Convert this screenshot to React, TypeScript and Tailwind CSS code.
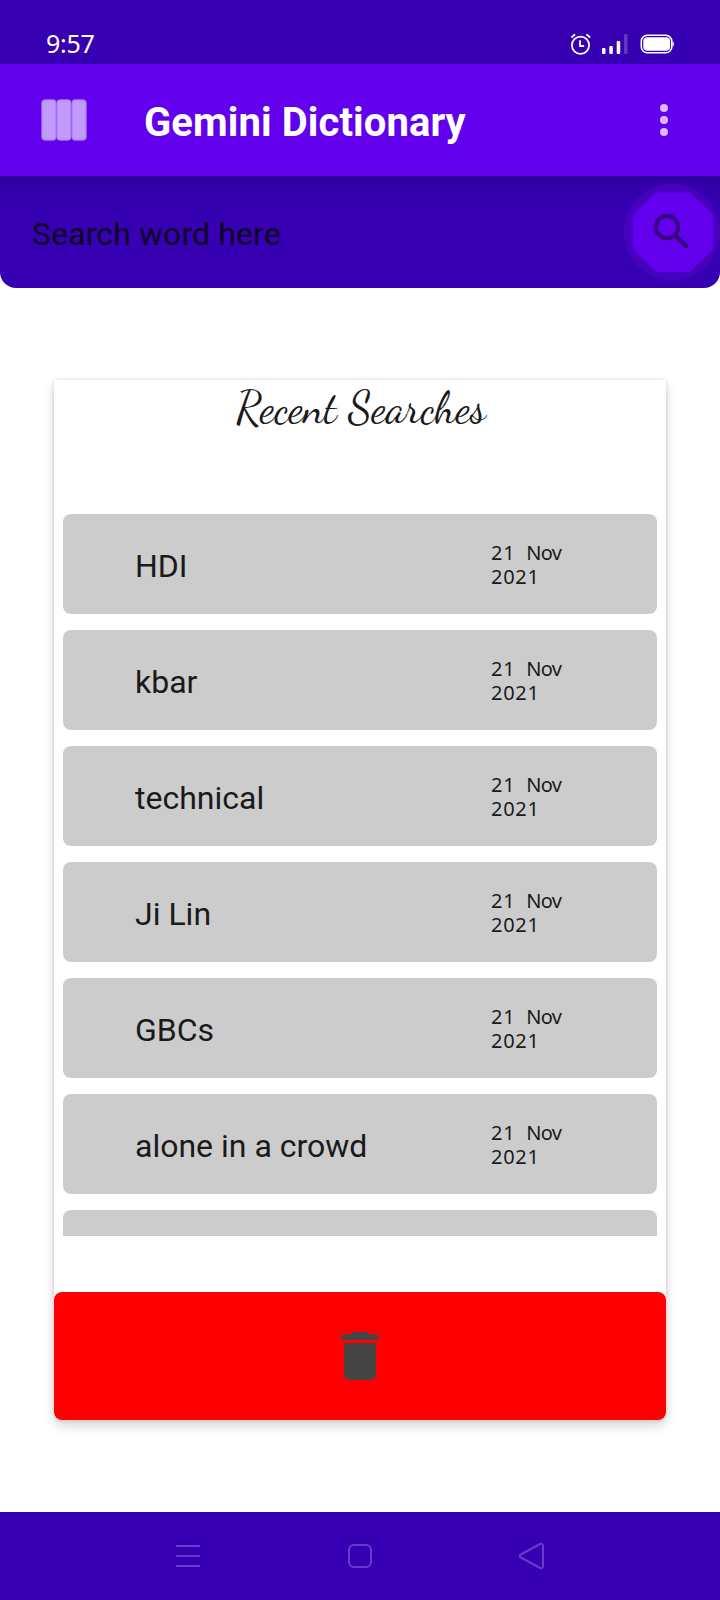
const SEARCHES = ['HDI', 'kbar', 'technical', 'Ji Lin', 'GBCs', 'alone in a crowd']

export default function App() {
  return (
    <div className="flex h-[1600px] w-[720px] flex-col overflow-hidden bg-white font-['Roboto',sans-serif] text-[#1a1a1a]">
      <StatusBar />
      <AppBar />
      <SearchBar />
      <main className="flex flex-1 flex-col px-[54px] pt-[92px] pb-[92px]">
        <section className="flex flex-1 flex-col rounded-t-xs rounded-b-lg bg-white shadow-[0_6px_12px_rgba(0,0,0,0.17),0_0_4px_rgba(0,0,0,0.12)]">
          <h2 className="h-[134px] pt-1 pl-0.5 text-center font-['Dancing_Script',cursive] text-[44px] leading-[48px]">
            Recent Searches
          </h2>
          <ul className="flex h-[722px] flex-col gap-4 overflow-hidden px-[9px]">
            {SEARCHES.map((word) => (
              <SearchRow key={word} word={word} />
            ))}
            <li className="h-[100px] shrink-0 rounded-lg bg-[#cccccc]" />
          </ul>
          <button type="button" aria-label="Clear history" className="mt-auto flex h-32 items-center justify-center rounded-lg bg-[#ff0000]">
            <svg width="64" height="64" viewBox="0 0 64 64" fill="#444444">
              <path d="M24 8h16v2.500h8.300a2.600 2.600 0 0 1 0 5.500H15.700a2.600 2.600 0 0 1 0-5.500H24z" />
              <path d="M16 19h32v31.500a5.500 5.500 0 0 1-5.500 5.500h-21a5.500 5.500 0 0 1-5.500-5.500z" />
            </svg>
          </button>
        </section>
      </main>
      <NavBar />
    </div>
  )
}

function SearchRow({ word }: { word: string }) {
  return (
    <li className="flex h-[100px] shrink-0 items-center rounded-lg bg-[#cccccc] pl-[72px]">
      <span className="w-[356px] pt-1 text-[32px] leading-10 whitespace-nowrap">{word}</span>
      <span className="pt-0.5 font-['Noto_Sans',sans-serif] text-[20px] leading-6 tracking-[0.7px]">
        <span className="mr-[5px]">21</span> <span className="tracking-[-0.7px]">Nov</span>
        <br />
        2021
      </span>
    </li>
  )
}

function StatusBar() {
  return (
    <header className="flex h-16 items-center justify-between bg-[#3700b3] pt-[24px] pr-[44px] pl-[46px] text-white">
      <span className="-mt-0.5 font-['Noto_Sans',sans-serif] text-[25px] leading-none tracking-[-0.3px]">9:57</span>
      <div className="flex items-center">
        <svg width="22" height="22" viewBox="0 0 22 22" fill="none" stroke="white" strokeWidth="1.800" strokeLinecap="round">
          <circle cx="10.500" cy="12.300" r="8.600" />
          <path d="M10 8v5h3.500M2 4l2.500-2.200M19.500 4 17 1.800" />
        </svg>
        <svg className="ml-[10px]" width="28" height="22" viewBox="0 0 28 22" fill="white">
          <rect x="0" y="15" width="3.500" height="6" rx="1" />
          <rect x="7.300" y="13" width="3.500" height="8" rx="1" />
          <rect x="14.700" y="8" width="3.500" height="13" rx="1" />
          <rect x="22" y="1" width="3.500" height="20" rx="1" opacity=".22" />
        </svg>
        <svg className="ml-[10px]" width="36" height="22" viewBox="0 0 36 22">
          <rect x="1.300" y="2.300" width="30.500" height="17.500" rx="6" fill="none" stroke="white" strokeWidth="1.600" />
          <rect x="3.300" y="4.300" width="26.800" height="13.500" rx="4" fill="white" />
          <path d="M32.500 8q3 3 0 6z" fill="white" />
        </svg>
      </div>
    </header>
  )
}

function AppBar() {
  return (
    <div className="flex h-28 items-center bg-[#6200ee] pr-[50px] pl-[41px]">
      <svg width="46" height="42" viewBox="0 0 46 42" fill="#c29bfa" stroke="#a56ff6" strokeWidth="1">
        <rect x="0.800" y="0.800" width="14.300" height="40.400" rx="3" />
        <rect x="15.800" y="0.800" width="14.300" height="40.400" rx="3" />
        <rect x="30.900" y="0.800" width="14.300" height="40.400" rx="3" />
      </svg>
      <h1 className="ml-[57px] flex-1 pt-1.5 text-[40px] leading-[48px] font-bold tracking-[0.1px] text-white">
        Gemini Dictionary
      </h1>
      <svg width="12" height="32" viewBox="0 0 12 32" fill="#dfb9ff">
        <circle cx="6" cy="4" r="4" />
        <circle cx="6" cy="16" r="4" />
        <circle cx="6" cy="28" r="4" />
      </svg>
    </div>
  )
}

function SearchBar() {
  return (
    <div className="flex h-28 items-center justify-between rounded-b-2xl bg-[#3700b3] bg-linear-to-b from-[#3000a0] via-[#3700b3] via-25% to-[#3700b3] pl-8">
      <span className="pt-1 text-[32px] leading-10 tracking-[0.1px] text-[#0b0024]">Search word here</span>
      <svg width="96" height="96" viewBox="0 0 96 96">
        <circle cx="48" cy="48" r="47.500" fill="#4700bd" stroke="#4c00c4" />
        <path d="M32 8.500h34L89.500 31v34L66 88H32L8.500 65V31z" fill="#6200ee" />
        <circle cx="43" cy="43" r="11.200" fill="none" stroke="#370080" strokeWidth="4" />
        <path d="M52 52l10 10" fill="none" stroke="#370080" strokeWidth="4.500" strokeLinecap="round" />
      </svg>
    </div>
  )
}

function NavBar() {
  return (
    <nav className="flex h-[88px] items-center justify-between bg-[#3700b3] pr-[174px] pl-[174px]">
      <svg width="28" height="28" viewBox="0 0 28 28" stroke="#6a3bcb" strokeWidth="2">
        <path d="M2 4h24M2 14h24M2 24h24" />
      </svg>
      <svg width="28" height="28" viewBox="0 0 28 28" fill="none" stroke="#6a3bcb" strokeWidth="2">
        <rect x="3" y="3" width="22" height="22" rx="5" />
      </svg>
      <svg width="28" height="28" viewBox="0 0 28 28" fill="none" stroke="#6a3bcb" strokeWidth="2">
        <path d="M2.700 12.500 22 2q3-1 3 2v20q0 3-3 2L2.700 15.500q-2-1.500 0-3z" />
      </svg>
    </nav>
  )
}
